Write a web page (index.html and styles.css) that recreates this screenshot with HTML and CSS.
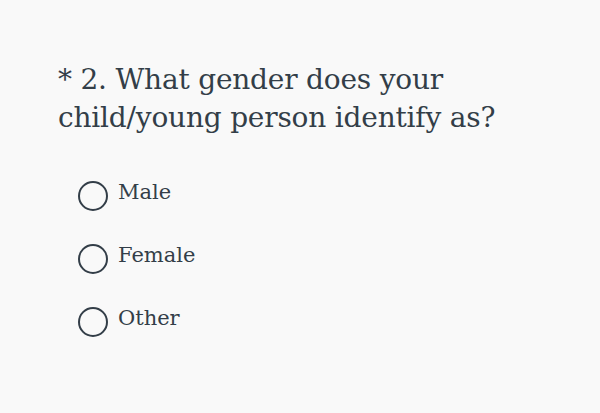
FILE: index.html
```html
<!DOCTYPE html>
<html lang="en">

<head>
  <meta charset="utf-8">
  <title>Survey question</title>
  <link rel="stylesheet" href="styles.css">
</head>

<body>
  <div class="question">
    <h2 class="question-title">* 2. What gender does your child/young person identify as?</h2>
    <ul class="options">
      <li class="option"><span class="radio"></span><span class="label">Male</span></li>
      <li class="option"><span class="radio"></span><span class="label">Female</span></li>
      <li class="option"><span class="radio"></span><span class="label">Other</span></li>
    </ul>
  </div>
</body>

</html>
```

FILE: styles.css
```css
* {
  margin: 0;
  padding: 0;
  box-sizing: border-box;
}

ul {
  list-style: none;
}

html,
body {
  width: 100%;
  height: 100%;
}

body {
  background-color: #f9f9f9;
  color: #333e48;
  font-family: "DejaVu Serif", "Liberation Serif", serif;
}

.question {
  padding: 61px 0 0 58px;
}

.question-title {
  font-weight: normal;
  font-size: 28px;
  line-height: 38px;
  width: 480px;
  letter-spacing: -0.2px;
}

.options {
  margin-top: 27px;
  padding-left: 20px;
}

.option {
  display: flex;
  align-items: center;
  height: 63px;
}

.radio {
  width: 30px;
  height: 30px;
  border: 2px solid #333e48;
  border-radius: 50%;
  margin-right: 10px;
}

.label {
  font-size: 21px;
  position: relative;
  top: -4px;
}
```
